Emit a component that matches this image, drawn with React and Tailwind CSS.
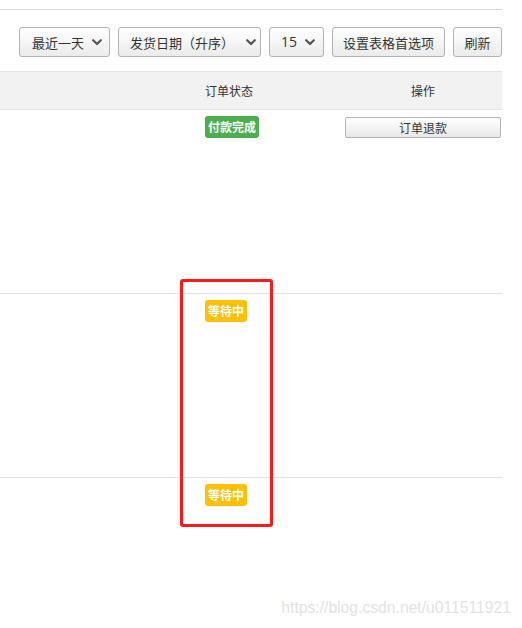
import React from "react";

const font = { fontFamily: '"Noto Sans CJK SC", "Liberation Sans", sans-serif' };

function Chevron() {
  return (
    <svg width="10" height="7" viewBox="0 0 10 7" className="shrink-0">
      <path d="M1.2 1.2 L5 5 L8.8 1.2" fill="none" stroke="#555" strokeWidth="2.2" strokeLinecap="round" strokeLinejoin="round" />
    </svg>
  );
}

function TBtn({ children, chevron, className = "" }) {
  return (
    <div
      className={
        "h-[30px] flex items-center rounded-[3px] border border-[#b3b3b3] bg-gradient-to-b from-white to-[#ebebeb] text-[13px] text-[#333] leading-none " +
        className
      }
    >
      <span>{children}</span>
      {chevron && <Chevron />}
    </div>
  );
}

function Badge({ children, color }) {
  return (
    <span
      className={
        "flex h-[22px] items-center rounded-[3px] px-[3px] text-[12px] font-bold text-white leading-none " + color
      }
    >
      {children}
    </span>
  );
}

function Row({ badge, action, last }) {
  return (
    <div className={"grid grid-cols-[205px_140px_156px] " + (last ? "h-[150px]" : "h-[184px] border-b border-[#e3e3e3]")}>
      <div />
      <div className="pt-[6px] flex items-start">{badge}</div>
      <div className="pt-[7px]">
        {action && (
          <div className="h-[21px] flex items-center justify-center rounded-[2px] border border-[#b3b3b3] bg-gradient-to-b from-white to-[#e8e8e8] text-[12px] text-[#333] leading-none">
            订单退款
          </div>
        )}
      </div>
    </div>
  );
}

export default function App() {
  return (
    <div className="relative w-[522px] h-[628px] bg-white overflow-hidden" style={font}>
      <div className="w-[502px] pt-[9px]">
        <div className="border-t border-[#d9d9d9]" />
        <div className="mt-[17px] flex justify-end gap-2">
          <TBtn chevron className="w-[91px] pl-[12px] gap-[8px]">最近一天</TBtn>
          <TBtn chevron className="w-[143px] pl-[11px] gap-[12px]">发货日期（升序）</TBtn>
          <TBtn chevron className="w-[55px] pl-[11px] gap-[8px]">
            <span style={{ fontFamily: '"Open Sans", "Liberation Sans", sans-serif' }} className="text-[14px]">15</span>
          </TBtn>
          <TBtn className="w-[113px] justify-center">设置表格首选项</TBtn>
          <TBtn className="w-[49px] justify-center">刷新</TBtn>
        </div>
        <div className="mt-[14px] grid grid-cols-[205px_140px_156px] h-[39px] items-center bg-[#f2f2f2] border-y border-[#e3e3e3] text-[12px] text-[#333]">
          <div />
          <div>订单状态</div>
          <div className="text-center">操作</div>
        </div>
        <Row badge={<Badge color="bg-[#4cae4c]">付款完成</Badge>} action />
        <Row badge={<Badge color="bg-[#ffc107]">等待中</Badge>} />
        <Row badge={<Badge color="bg-[#ffc107]">等待中</Badge>} last />
      </div>

      <div className="absolute left-[180px] top-[279px] w-[93px] h-[248px] rounded-[3px] border-[3px] border-[#ff1a1a]" />

      <div
        className="absolute right-[11px] top-[600px] text-[15.7px] text-[#e3e3e3] leading-none"
        style={{ fontFamily: '"Liberation Sans", Arial, sans-serif' }}
      >
        https://blog.csdn.net/u011511921
      </div>
    </div>
  );
}
